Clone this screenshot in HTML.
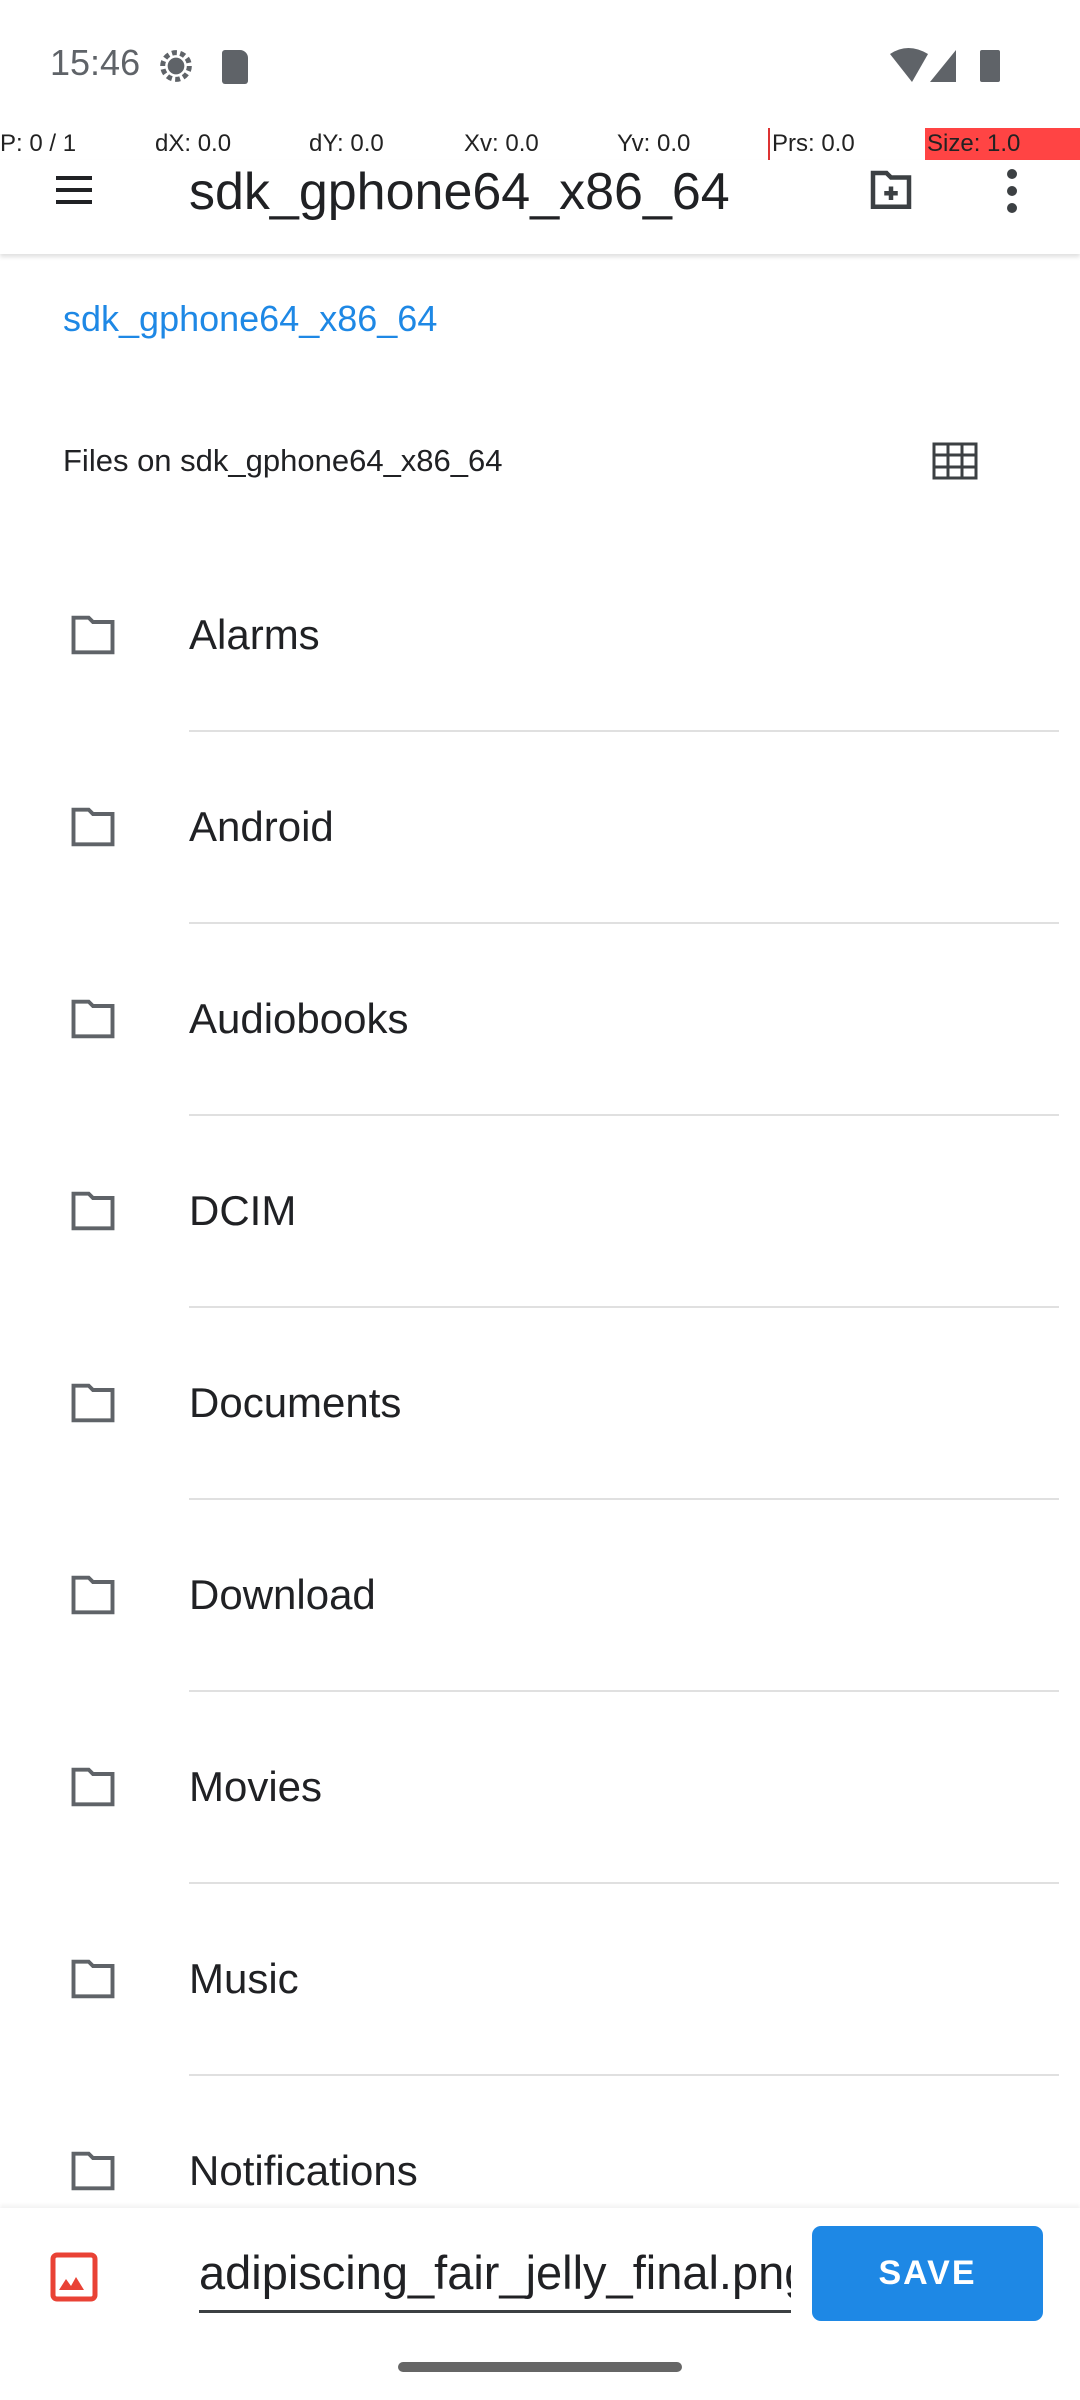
<!DOCTYPE html>
<html><head><meta charset="utf-8"><style>
*{margin:0;padding:0;box-sizing:border-box}
body{width:1080px;height:2400px;background:#fff;font-family:"Liberation Sans",sans-serif;position:relative;overflow:hidden;color:#202124}
.a{position:absolute}
.dbg{top:128px;height:32px;font-size:24px;color:#222;line-height:32px}
.row{position:absolute;left:0;width:1080px;height:192px}
.row svg{position:absolute;left:66px;top:50%;margin-top:-26px}
.row span{position:absolute;left:189px;top:50%;transform:translateY(-50%);font-size:42px;color:#202124}
.div{position:absolute;left:189px;right:21px;height:2px;background:#e0e0e0}
</style></head><body>
<div class="a" style="left:50px;top:42px;font-size:36px;color:#5f6368">15:46</div>
<svg class="a" style="left:156px;top:46px" width="40" height="40" viewBox="0 0 24 24"><circle cx="12" cy="12" r="8" fill="none" stroke="#5f6368" stroke-width="3" stroke-dasharray="3 2"/><circle cx="12" cy="12" r="5" fill="#5f6368"/></svg>
<div class="a" style="left:222px;top:50px;width:26px;height:34px;background:#5f6368;border-radius:3px 8px 3px 3px"></div>
<svg class="a" style="left:888px;top:46px" width="128" height="40" viewBox="0 0 128 40"><path d="M2 8 Q20 -4 40 8 L24 36 Z" fill="#5f6368"/><path d="M42 36 L68 4 L68 36 Z" fill="#5f6368"/><rect x="92" y="4" width="20" height="32" rx="2" fill="#5f6368"/></svg>
<div class="a dbg" style="left:0">P: 0 / 1</div>
<div class="a dbg" style="left:155px">dX: 0.0</div>
<div class="a dbg" style="left:309px">dY: 0.0</div>
<div class="a dbg" style="left:464px">Xv: 0.0</div>
<div class="a dbg" style="left:617px">Yv: 0.0</div>
<div class="a" style="left:768px;top:128px;width:2px;height:32px;background:#d33"></div>
<div class="a dbg" style="left:772px">Prs: 0.0</div>
<div class="a dbg" style="left:925px;width:155px;background:#f44;padding-left:2px">Size: 1.0</div>
<div class="a" style="left:0;top:160px;width:1080px;height:94px;background:#fff;box-shadow:0 3px 4px rgba(0,0,0,.12)"></div>
<svg class="a" style="left:50px;top:166px" width="48" height="48" viewBox="0 0 24 24"><path d="M3 6h18M3 12h18M3 18h18" stroke="#202124" stroke-width="2"/></svg>
<div class="a" style="left:189px;top:161px;font-size:52px;color:#202124;line-height:62px">sdk_gphone64_x86_64</div>
<svg class="a" style="left:864px;top:164px" width="54" height="54" viewBox="0 0 24 24"><path d="M4 4h6l2 2h8v13H4z" fill="none" stroke="#3c4043" stroke-width="2"/><path d="M12 10v6M9 13h6" stroke="#3c4043" stroke-width="2"/></svg>
<svg class="a" style="left:1000px;top:164px" width="24" height="54" viewBox="0 0 24 54"><circle cx="12" cy="10" r="5" fill="#3c4043"/><circle cx="12" cy="27" r="5" fill="#3c4043"/><circle cx="12" cy="44" r="5" fill="#3c4043"/></svg>
<div class="a" style="left:63px;top:298px;font-size:36px;color:#1e88e5">sdk_gphone64_x86_64</div>
<div class="a" style="left:63px;top:443px;font-size:31px;color:#202124">Files on sdk_gphone64_x86_64</div>
<svg class="a" style="left:932px;top:442px" width="46" height="38" viewBox="0 0 46 38"><path d="M2 2h42v34H2zM2 13h42M2 25h42M16 2v34M30 2v34" fill="none" stroke="#3c4043" stroke-width="3"/></svg>
<div class="row" style="top:539px"><svg width="54" height="52" viewBox="0 0 24 24"><path d="M3 4h7l2 2h9v14H3z" fill="none" stroke="#5f6368" stroke-width="1.8"/></svg><span>Alarms</span></div>
<div class="div" style="top:730px"></div>
<div class="row" style="top:731px"><svg width="54" height="52" viewBox="0 0 24 24"><path d="M3 4h7l2 2h9v14H3z" fill="none" stroke="#5f6368" stroke-width="1.8"/></svg><span>Android</span></div>
<div class="div" style="top:922px"></div>
<div class="row" style="top:923px"><svg width="54" height="52" viewBox="0 0 24 24"><path d="M3 4h7l2 2h9v14H3z" fill="none" stroke="#5f6368" stroke-width="1.8"/></svg><span>Audiobooks</span></div>
<div class="div" style="top:1114px"></div>
<div class="row" style="top:1115px"><svg width="54" height="52" viewBox="0 0 24 24"><path d="M3 4h7l2 2h9v14H3z" fill="none" stroke="#5f6368" stroke-width="1.8"/></svg><span>DCIM</span></div>
<div class="div" style="top:1306px"></div>
<div class="row" style="top:1307px"><svg width="54" height="52" viewBox="0 0 24 24"><path d="M3 4h7l2 2h9v14H3z" fill="none" stroke="#5f6368" stroke-width="1.8"/></svg><span>Documents</span></div>
<div class="div" style="top:1498px"></div>
<div class="row" style="top:1499px"><svg width="54" height="52" viewBox="0 0 24 24"><path d="M3 4h7l2 2h9v14H3z" fill="none" stroke="#5f6368" stroke-width="1.8"/></svg><span>Download</span></div>
<div class="div" style="top:1690px"></div>
<div class="row" style="top:1691px"><svg width="54" height="52" viewBox="0 0 24 24"><path d="M3 4h7l2 2h9v14H3z" fill="none" stroke="#5f6368" stroke-width="1.8"/></svg><span>Movies</span></div>
<div class="div" style="top:1882px"></div>
<div class="row" style="top:1883px"><svg width="54" height="52" viewBox="0 0 24 24"><path d="M3 4h7l2 2h9v14H3z" fill="none" stroke="#5f6368" stroke-width="1.8"/></svg><span>Music</span></div>
<div class="div" style="top:2074px"></div>
<div class="row" style="top:2075px"><svg width="54" height="52" viewBox="0 0 24 24"><path d="M3 4h7l2 2h9v14H3z" fill="none" stroke="#5f6368" stroke-width="1.8"/></svg><span>Notifications</span></div>
<div class="a" style="left:0;top:2208px;width:1080px;height:192px;background:#fff;box-shadow:0 -3px 4px rgba(0,0,0,.05)"></div>
<svg class="a" style="left:50px;top:2252px" width="48" height="50" viewBox="0 0 48 50"><rect x="3" y="3" width="42" height="44" rx="4" fill="none" stroke="#e94235" stroke-width="5"/><path d="M9 38l7-11 5 7 5-9 8 13z" fill="#e94235"/></svg>
<div class="a" style="left:199px;top:2244px;width:592px;overflow:hidden;white-space:nowrap;font-size:47px;color:#202124;line-height:58px">adipiscing_fair_jelly_final.png</div>
<div class="a" style="left:199px;top:2310px;width:592px;height:3px;background:#3c4043"></div>
<div class="a" style="left:812px;top:2226px;width:231px;height:95px;background:#1e88e5;border-radius:9px;color:#fff;font-size:34px;font-weight:bold;letter-spacing:2px;text-align:center;line-height:95px">SAVE</div>
<div class="a" style="left:398px;top:2362px;width:284px;height:10px;background:#666;border-radius:5px"></div>
</body></html>
